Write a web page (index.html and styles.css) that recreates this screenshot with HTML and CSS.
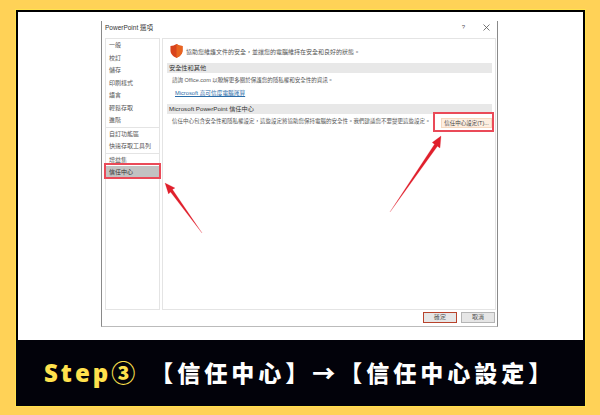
FILE: index.html
```html
<!DOCTYPE html>
<html lang="zh-TW">
<head>
    <meta charset="UTF-8">
    <title>PowerPoint 選項 Step3</title>
    <link rel="stylesheet" href="styles.css">
</head>
<body>
    <div class="frame">
        <div class="shot">
            <div class="dialog">
                <div class="title-row">
                    <span class="title">PowerPoint 選項</span>
                    <span class="help">?</span>
                    <svg class="close" width="7" height="7" viewBox="0 0 7 7"><path d="M.5.5l6 6M6.500.5l-6 6" stroke="#555" stroke-width=".8" fill="none"/></svg>
                </div>
                <div class="panes">
                    <div class="side">
                        <div class="side-group">
                            <div class="side-item">一般</div>
                            <div class="side-item">校訂</div>
                            <div class="side-item">儲存</div>
                            <div class="side-item">印刷樣式</div>
                            <div class="side-item">語言</div>
                            <div class="side-item">輕鬆存取</div>
                            <div class="side-item">進階</div>
                        </div>
                        <div class="side-group">
                            <div class="side-item">自訂功能區</div>
                            <div class="side-item">快速存取工具列</div>
                        </div>
                        <div class="side-group no-line">
                            <div class="side-item">增益集</div>
                            <div class="side-item active">信任中心</div>
                        </div>
                    </div>
                    <div class="main">
                        <div class="intro">
                            <svg class="shield" width="13" height="14" viewBox="0 0 14 15"><path d="M7 0C5 1.400 3 2 .5 2v5c0 4 3 6.500 6.500 8 3.500-1.500 6.500-4 6.500-8V2C11 2 9 1.400 7 0z" fill="#d8431c"/><path d="M7 0C9 1.400 11 2 13.500 2v5c0 4-3 6.500-6.500 8z" fill="#e8641f"/></svg>
                            <span>協助您維護文件的安全，並讓您的電腦維持在安全和良好的狀態。</span>
                        </div>
                        <div class="sec-head">安全性和其他</div>
                        <div class="sec-text">諮詢 Office.com 以瞭解更多關於保護您的隱私權和安全性的資訊。</div>
                        <a class="sec-link">Microsoft 高可信度電腦運算</a>
                        <div class="sec-head second">Microsoft PowerPoint 信任中心</div>
                        <div class="trust-row">
                            <div class="sec-text">信任中心包含安全性和隱私權設定，這些設定將協助您保持電腦的安全性。我們建議您不要變更這些設定。</div>
                            <div class="trust-btn">信任中心設定(T)...</div>
                        </div>
                    </div>
                </div>
                <div class="foot">
                    <div class="btn ok">確定</div>
                    <div class="btn">取消</div>
                </div>
            </div>
            <!-- 紅框和箭頭 -->
            <div class="mark mark-side"></div>
            <div class="mark mark-btn"></div>
            <svg class="arrows" width="600" height="340" viewBox="0 0 600 340">
                <path d="M165 183l10 5-2.500 1.500L202 233 170.500 192l-2 2z" fill="#e0202c" stroke="#e0202c" stroke-width=".2"/>
                <path d="M441 136l-1 12-2.600-1.700L390 212l44.500-67.800-2.300-1.700z" fill="#e0202c" stroke="#e0202c" stroke-width=".2"/>
            </svg>
        </div>
        <div class="bar">
            <span class="step">Step③</span>
            <span class="caption">【信任中心】→【信任中心設定】</span>
        </div>
    </div>
</body>
</html>
```

FILE: styles.css
```css
body {
    margin: 0;
    width: 600px;
    height: 415px;
    overflow: hidden;
    background: #ffd257;
    font-family: "Liberation Sans", "Noto Sans CJK TC", sans-serif;
}

.frame {
    position: relative;
    box-sizing: border-box;
    width: 571px;
    height: 398px;
    margin: 9px 0 0 15px;
    border: 1px solid #ffe14d;
    display: flex;
    flex-direction: column;
}

.shot {
    box-sizing: border-box;
    height: 330px;
    background: #fff;
    border-top: 2px solid #000;
    border-left: 2px solid #000;
    border-right: 2px solid #000;
    padding: 9px 0 0 83px;
}

.arrows {
    position: absolute;
    left: -16px;
    top: -10px;
    pointer-events: none;
}

.mark {
    position: absolute;
    box-sizing: border-box;
    border: 2px solid #ea4a58;
}

.mark-side {
    left: 88px;
    top: 153px;
    width: 57px;
    height: 16px;
}

.mark-btn {
    left: 417px;
    top: 102px;
    width: 61px;
    height: 20px;
}

.dialog {
    box-sizing: border-box;
    width: 397px;
    height: 306px;
    border-left: 1px solid #8a8a8a;
    border-right: 1px solid #8a8a8a;
    border-bottom: 1px solid #bbb;
    background: #fff;
    padding: 0 1px 0 3px;
}

.title-row {
    box-sizing: border-box;
    height: 17px;
    padding-bottom: 5px;
    display: flex;
    align-items: center;
    font-size: 6px;
    color: #333;
}

.title {
    flex: 1;
    font-size: 6.500px;
}

.help {
    margin-right: 18px;
    color: #555;
}

.close {
    margin-right: 6px;
}

.panes {
    display: flex;
    gap: 2px;
    height: 272px;
}

.side {
    width: 55px;
    box-sizing: border-box;
    border: 1px solid #e4e4e4;
}

.side-group {
    border-bottom: 1px solid #e4e4e4;
}

.side-group.no-line {
    border-bottom: none;
}

.side-item {
    height: 12.500px;
    line-height: 12.500px;
    padding-left: 3px;
    font-size: 6px;
    color: #555;
}

.side-item.active {
    height: 13px;
    line-height: 13px;
    background: #c2c2c2;
    color: #333;
}

.main {
    flex: 1;
    border: 1px solid #e4e4e4;
    padding: 0 3px 0 4px;
    font-size: 5.500px;
    color: #555;
}

.intro {
    height: 24px;
    display: flex;
    align-items: center;
    gap: 3px;
    padding-left: 3px;
    font-size: 6px;
}

.shield {
    flex: none;
}

.sec-head {
    height: 10px;
    line-height: 10px;
    background: #e8e8e8;
    padding-left: 2px;
    color: #333;
    font-size: 6.200px;
}

.sec-head.second {
    margin-top: 6px;
}

.sec-text {
    line-height: 10px;
    padding: 2px 0 0 5px;
    white-space: nowrap;
}

.sec-link {
    display: block;
    margin: 3px 0 0 8px;
    line-height: 10px;
    font-size: 5.700px;
    color: #2a6ca8;
    text-decoration: underline;
}

.trust-row {
    display: flex;
    justify-content: space-between;
    align-items: flex-start;
}

.trust-btn {
    width: 51px;
    height: 10px;
    margin-top: 4px;
    box-sizing: border-box;
    line-height: 8px;
    text-align: center;
    background: #fdeee0;
    border: 1px solid #f6d9c0;
    color: #444;
    white-space: nowrap;
}

.foot {
    display: flex;
    justify-content: flex-end;
    gap: 4px;
    padding: 2px 1px 0 0;
}

.btn {
    width: 34px;
    height: 11px;
    box-sizing: border-box;
    background: #e6e6e6;
    border: 1px solid #b5b5b5;
    font-size: 6px;
    line-height: 9px;
    text-align: center;
    color: #555;
}

.btn.ok {
    border-color: #b8432c;
}

.bar {
    flex: 1;
    background: #02020a;
    display: flex;
    align-items: center;
    padding: 0 0 3px 28px;
    font-family: "Noto Sans", "Noto Sans CJK TC", sans-serif;
    font-weight: 900;
    white-space: nowrap;
}

.step {
    color: #ffe14d;
    font-size: 24px;
    letter-spacing: 3px;
}

.caption {
    color: #fff;
    font-size: 23px;
    letter-spacing: 4px;
    margin-left: 12px;
}
```
